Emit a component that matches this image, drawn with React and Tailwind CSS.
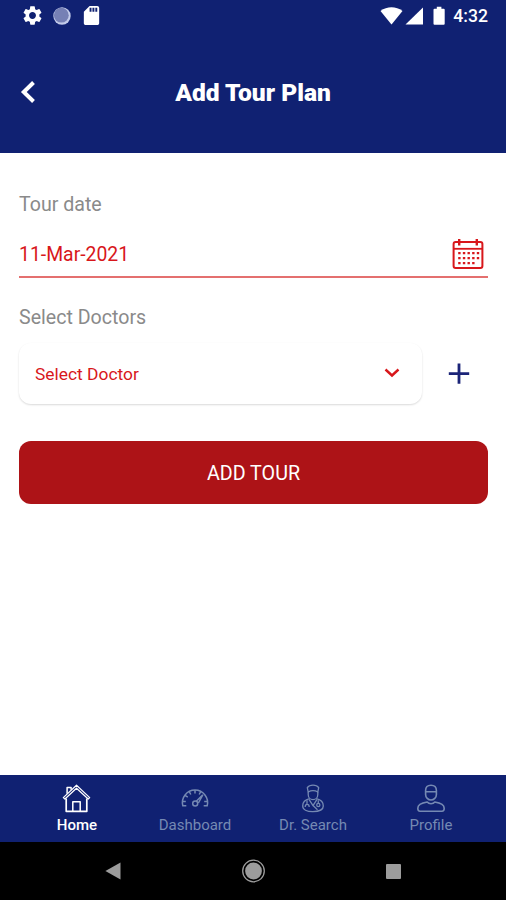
import { useState } from 'react'
import { MdSettings, MdSdCard } from 'react-icons/md'

const tabs = [
  { name: 'Home', icon: HomeIcon },
  { name: 'Dashboard', icon: GaugeIcon },
  { name: 'Dr. Search', icon: DoctorIcon },
  { name: 'Profile', icon: ProfileIcon },
]

function HomeIcon() {
  return (
    <svg width="30" height="30" viewBox="0 0 30 30" fill="none" stroke="currentColor" strokeWidth="1.7" strokeLinejoin="round">
      <path d="M4.2 15.5v12.8h20.6V15.5" />
      <path d="M1.3 14.6 14.5 2.2l13.2 12.4-1.5 1.4L14.5 5.2 2.9 16z" strokeWidth="1.2" />
      <path d="M5.1 10.8V4.4h4v2.4M10.8 28.1v-9.3h7.4v9.3" strokeWidth="1.5" />
    </svg>
  )
}

function GaugeIcon() {
  return (
    <svg width="30" height="30" viewBox="0 0 30 30" fill="none" stroke="currentColor" strokeWidth="1.5">
      <path d="M6.3 22.8H2.8A12.6 12.6 0 1 1 27.2 22.8h-3.5" />
      <path d="M2.4 18.5h3.4M5 12.4l2.8 1.8M9.2 8.5l1.6 3M15 7v3.4M20.8 8.5l-1.6 3M27.6 18.5h-3.4" />
      <path d="m16.3 18.2 6.5-6.4-4.4 8.2" />
      <circle cx="15.2" cy="20.6" r="2.5" />
    </svg>
  )
}

function DoctorIcon() {
  return (
    <svg width="30" height="30" viewBox="0 0 30 30" fill="none" stroke="currentColor" strokeWidth="1.3" strokeLinejoin="round">
      <path d="m10.2 9-.9-4.4C11.7 1.2 18.3 1.2 20.7 4.6L19.8 9c-2.8-1.6-6.8-1.6-9.6 0z" />
      <path d="M10.2 9v2.4c0 3 2.2 5.2 4.8 5.2s4.8-2.2 4.8-5.2V9" />
      <path d="M11.5 15.7c-4.2 1-6.8 3.3-6.8 7.2 0 3.6 4.2 5.7 10 5.7 6.2 0 10.6-2 10.6-5.7 0-3.9-2.8-6.2-6.8-7.2" />
      <path d="m11 16.4 4 6.2 4-6.2M9 17.2v4.2M7.2 24c0-3.6 4-3.6 4 0M15 22.6l4.5 4.2M20.3 17.2v3" />
      <circle cx="20.3" cy="22" r="1.6" />
    </svg>
  )
}

function ProfileIcon() {
  return (
    <svg width="30" height="30" viewBox="0 0 30 30" fill="none" stroke="currentColor" strokeWidth="1.6" strokeLinejoin="round">
      <path d="M9.6 7.4C9.6 4 12 2.2 15 2.2s5.4 1.8 5.4 5.2v4c0 3.2-2.5 5.6-5.4 5.6s-5.4-2.4-5.4-5.6zM9.6 8.8h10.8" />
      <path d="M11.2 19c-4.8.8-9.4 2.6-9.4 6.2 0 2 .8 3 2.2 3h22c1.4 0 2.2-1 2.2-3 0-3.6-4.6-5.4-9.4-6.2-1.8 2.4-5.8 2.4-7.6 0z" />
    </svg>
  )
}

function CalendarIcon() {
  return (
    <svg width="32" height="32" viewBox="0 0 32 32" fill="none" stroke="currentColor" strokeWidth="2">
      <rect x="1.6" y="4" width="28.8" height="26" rx="2" />
      <path d="M2 10.8h28" strokeWidth="1.8" />
      <path d="M7.2 1v6.5M24.8 1v6.5" strokeWidth="2.4" />
      <path d="M6.2 15.2h21.5M6.2 20.2h21.5M6.2 25.2h17" strokeWidth="2.2" strokeDasharray="2.4 2.25" />
    </svg>
  )
}

function StatusBar() {
  return (
    <div className="flex h-8 items-center justify-between pr-[18px] pb-px pl-[21px] text-white">
      <div className="flex items-center">
        <MdSettings size={23} />
        <svg className="ml-[9px]" width="18" height="18" viewBox="0 0 18 18">
          <circle cx="9" cy="9" r="8.7" fill="#c3cbea" />
          <circle cx="8.3" cy="8.2" r="7.4" fill="#7680b5" />
        </svg>
        <MdSdCard className="ml-[9px]" size={23} />
      </div>
      <div className="flex items-center">
        <svg width="66" height="20" viewBox="0 0 66 20" fill="currentColor">
          <path d="M.5 5C7 0 16 0 22.5 5L11.5 18.5z" />
          <path d="M43 1.5v17H25.5z" />
          <path d="M54.5 2.8h2.3V.8h4.6v2h2.3q1 0 1 1v14q0 1-1 1h-9.2q-1 0-1-1v-14q0-1 1-1z" />
        </svg>
        <span className="ml-[7px] text-[17.6px] leading-5 font-medium">4:32</span>
      </div>
    </div>
  )
}

function SystemNav() {
  return (
    <div className="flex h-[58px] items-center justify-between bg-black pr-[105px] pl-[105px] text-[#9c9c9c]">
      <svg width="16" height="18" viewBox="0 0 16 18" fill="currentColor">
        <path d="M15.5.5v17L.4 9z" />
      </svg>
      <svg width="24" height="24" viewBox="0 0 24 24" fill="currentColor">
        <circle cx="11.5" cy="12" r="8.4" />
        <circle cx="11.5" cy="12" r="10.8" fill="none" stroke="currentColor" strokeWidth="1.3" />
      </svg>
      <div className="size-[15px] rounded-[1px] bg-[#9c9c9c]" />
    </div>
  )
}

export default function App() {
  const [active, setActive] = useState('Home')

  return (
    <div className="flex h-[900px] w-[506px] flex-col bg-white font-['Roboto',sans-serif]">
      {/* Header */}
      <header className="h-[153px] bg-[#102172]">
        <StatusBar />
        <div className="mt-9 grid h-12 grid-cols-[60px_1fr_60px] items-center text-white">
          <button className="pl-5">
            <svg width="16" height="24" viewBox="0 0 16 24" fill="none" stroke="currentColor" strokeWidth="4">
              <path d="M13.5 2.5 3.8 12l9.7 9.5" />
            </svg>
          </button>
          <h1 className="pt-0.5 text-center text-[24.6px] leading-8 font-black">Add Tour Plan</h1>
        </div>
      </header>

      {/* Form */}
      <main className="flex-1 pt-[38px] pr-[18px] pl-[19px]">
        <label className="block text-[19.6px] leading-7 text-[#8a8a8a]">Tour date</label>
        <div className="mt-[11px] flex h-[46px] items-start justify-between pr-1 text-[#d8171b]">
          <span className="pt-[11px] text-[19.4px] leading-7">11-Mar-2021</span>
          <div className="pt-2">
            <CalendarIcon />
          </div>
        </div>
        <div className="h-0.5 bg-[#e4706f]" />

        <label className="mt-[26px] block text-[19.6px] leading-7 text-[#8a8a8a]">Select Doctors</label>
        <div className="mt-[11px] flex items-center">
          <button className="flex h-[61px] w-[403px] items-center justify-between rounded-xl bg-white pr-[22px] pl-4 text-[#d8171b] shadow-[0_1px_2px_rgba(0,0,0,0.15)]">
            <span className="pt-0.5 text-[17.4px]">Select Doctor</span>
            <svg width="16" height="12" viewBox="0 0 16 12" fill="none" stroke="currentColor" strokeWidth="2.4">
              <path d="m1.5 1.5 6.5 6 6.5-6" />
            </svg>
          </button>
          <button className="ml-[26px] text-[#1b2478]">
            <svg width="22" height="22" viewBox="0 0 22 22" stroke="currentColor" strokeWidth="2.8">
              <path d="M11 .4v20.4M.8 10.6h20.4" />
            </svg>
          </button>
        </div>

        <button className="mt-[37px] h-[63px] w-full rounded-xl bg-[#ad1317] pt-[3px] text-[19.7px] text-white">
          ADD TOUR
        </button>
      </main>

      {/* Bottom tabs */}
      <nav className="grid h-[67px] grid-cols-4 bg-[#102172] pr-4 pl-[18px]">
        {tabs.map((tab) => (
          <button
            key={tab.name}
            onClick={() => setActive(tab.name)}
            className={`flex flex-col items-center pt-2 text-[15px] leading-5 ${
              active === tab.name ? 'font-medium text-white' : 'text-[#7589b3]'
            }`}
          >
            <tab.icon />
            <span className="mt-0.5">{tab.name}</span>
          </button>
        ))}
      </nav>
      <SystemNav />
    </div>
  )
}
